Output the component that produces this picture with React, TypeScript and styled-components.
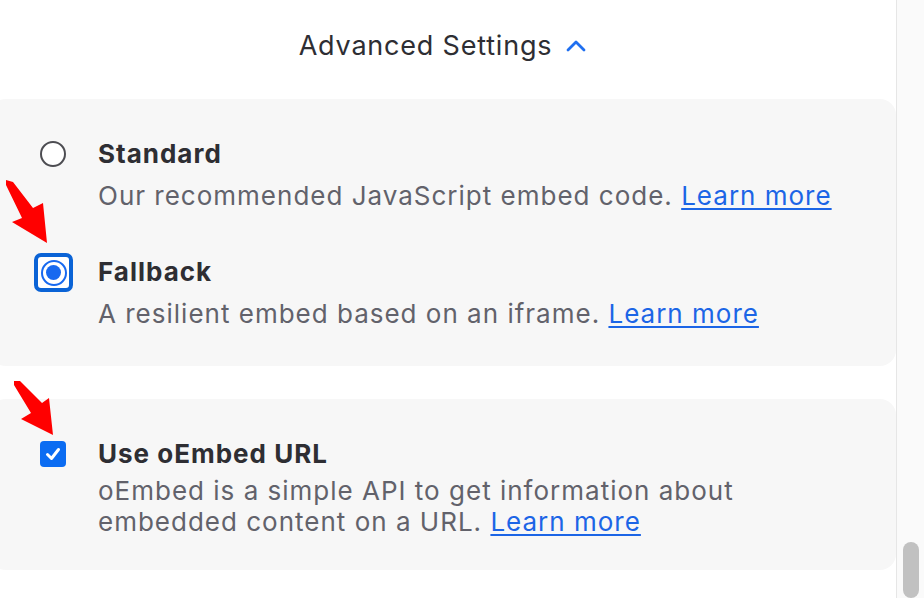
import React from "react";
import styled, { createGlobalStyle } from "styled-components";

const Global = createGlobalStyle`
  html, body { margin: 0; padding: 0; background: #ffffff; }
  body { font-family: Inter, "Noto Sans", sans-serif; -webkit-font-smoothing: antialiased; }
  * { box-sizing: border-box; }
`;

const Page = styled.div`
  position: relative;
  display: flex;
  width: 924px;
  height: 598px;
  overflow: hidden;
  background: #ffffff;
`;

const Main = styled.div`
  flex: 1;
  min-width: 0;
  display: flex;
  flex-direction: column;
`;

const Header = styled.div`
  display: flex;
  justify-content: center;
  align-items: flex-start;
  gap: 13px;
  padding-top: 30px;
  height: 99px;
  padding-right: 10px;
`;

const HeaderTitle = styled.span`
  font-size: 27px;
  line-height: 32px;
  letter-spacing: 0.8px;
  color: #2e2e33;
  font-weight: 400;
`;

const Chevron = styled.svg`
  width: 22px;
  height: 14px;
  margin-top: 9px;
`;

const Panels = styled.div`
  display: flex;
  flex-direction: column;
  gap: 33px;
  margin-left: -10px;
`;

const Panel = styled.div<{ $pt?: number; $pb?: number }>`
  background: #f7f7f7;
  border-radius: 16px;
  padding: ${(p) => p.$pt ?? 39}px 40px ${(p) => p.$pb ?? 37}px 50px;
  display: flex;
  flex-direction: column;
  gap: 45px;
`;

const Option = styled.div`
  display: flex;
  align-items: flex-start;
  gap: 32px;
`;

const ControlSlot = styled.div`
  width: 26px;
  height: 32px;
  flex: none;
  display: flex;
  align-items: center;
  justify-content: center;
  position: relative;
`;

const Radio = styled.span<{ $checked?: boolean }>`
  width: 26px;
  height: 26px;
  border-radius: 50%;
  background: #ffffff;
  border: 2px solid ${(p) => (p.$checked ? "#1769f0" : "#4d4d52")};
  display: flex;
  align-items: center;
  justify-content: center;
  &::after {
    content: "";
    display: ${(p) => (p.$checked ? "block" : "none")};
    width: 15px;
    height: 15px;
    border-radius: 50%;
    background: #1769f0;
  }
`;

const FocusRing = styled.span`
  position: absolute;
  left: -6px;
  top: -3px;
  width: 39px;
  height: 39px;
  border: 4px solid #0a63d6;
  border-radius: 7px;
  background: #ffffff;
  display: flex;
  align-items: center;
  justify-content: center;
`;

const Checkbox = styled.span`
  width: 26px;
  height: 26px;
  border-radius: 4px;
  background: #0b6cf2;
  display: flex;
  align-items: center;
  justify-content: center;
`;

const Texts = styled.div<{ $gap?: number }>`
  display: flex;
  flex-direction: column;
  gap: ${(p) => p.$gap ?? 10}px;
  min-width: 0;
`;

const Title = styled.div`
  font-size: 26px;
  line-height: 32px;
  letter-spacing: 1px;
  font-weight: 700;
  color: #2e2e33;
`;

const Desc = styled.div`
  font-size: 26px;
  line-height: 31px;
  letter-spacing: 1px;
  color: #62626b;
  max-width: 745px;
`;

const Link = styled.a`
  color: #1c65e6;
  text-decoration: underline;
  text-underline-offset: 3px;
  text-decoration-thickness: 2px;
  cursor: pointer;
`;

const ScrollTrack = styled.div`
  width: 28px;
  flex: none;
  border-left: 1px solid #e6e6e6;
  background: #fafafa;
  display: flex;
  flex-direction: column;
  align-items: center;
  padding-top: 542px;
`;

const ScrollThumb = styled.div`
  width: 16px;
  height: 80px;
  border-radius: 8px;
  background: #c1c1c1;
  margin-left: 1px;
`;

const Overlay = styled.svg`
  position: absolute;
  left: 0;
  top: 0;
  width: 924px;
  height: 598px;
  pointer-events: none;
`;

export default function App() {
  return (
    <>
      <Global />
      <Page>
        <Main>
          <Header>
            <HeaderTitle>Advanced Settings</HeaderTitle>
            <Chevron viewBox="0 0 22 14">
              <polyline
                points="3,11 11,3 19,11"
                fill="none"
                stroke="#1f6ff0"
                strokeWidth="2.8"
                strokeLinecap="round"
                strokeLinejoin="round"
              />
            </Chevron>
          </Header>
          <Panels>
            <Panel>
              <Option>
                <ControlSlot>
                  <Radio />
                </ControlSlot>
                <Texts>
                  <Title>Standard</Title>
                  <Desc>
                    Our recommended JavaScript embed code. <Link>Learn more</Link>
                  </Desc>
                </Texts>
              </Option>
              <Option>
                <ControlSlot>
                  <FocusRing>
                    <Radio $checked />
                  </FocusRing>
                </ControlSlot>
                <Texts>
                  <Title>Fallback</Title>
                  <Desc>
                    A resilient embed based on an iframe. <Link>Learn more</Link>
                  </Desc>
                </Texts>
              </Option>
            </Panel>
            <Panel $pb={33}>
              <Option>
                <ControlSlot>
                  <Checkbox>
                    <svg width="18" height="18" viewBox="0 0 18 18">
                      <polyline
                        points="3.5,9.5 7.5,13.5 14.5,4.5"
                        fill="none"
                        stroke="#ffffff"
                        strokeWidth="3"
                        strokeLinecap="round"
                        strokeLinejoin="round"
                      />
                    </svg>
                  </Checkbox>
                </ControlSlot>
                <Texts $gap={5}>
                  <Title>Use oEmbed URL</Title>
                  <Desc>
                    oEmbed is a simple API to get information about embedded content on a URL.{" "}
                    <Link>Learn more</Link>
                  </Desc>
                </Texts>
              </Option>
            </Panel>
          </Panels>
        </Main>
        <ScrollTrack>
          <ScrollThumb />
        </ScrollTrack>
        <Overlay viewBox="0 0 924 598">
          <polygon
            points="6,180 13,182 33,208 43,203 47,243 12,222 22,218 6,185"
            fill="#ff0000"
          />
          <polygon
            points="14,381 20,381 42,403 49,398 53,435 21,419 31,413 14,385"
            fill="#ff0000"
          />
        </Overlay>
      </Page>
    </>
  );
}
